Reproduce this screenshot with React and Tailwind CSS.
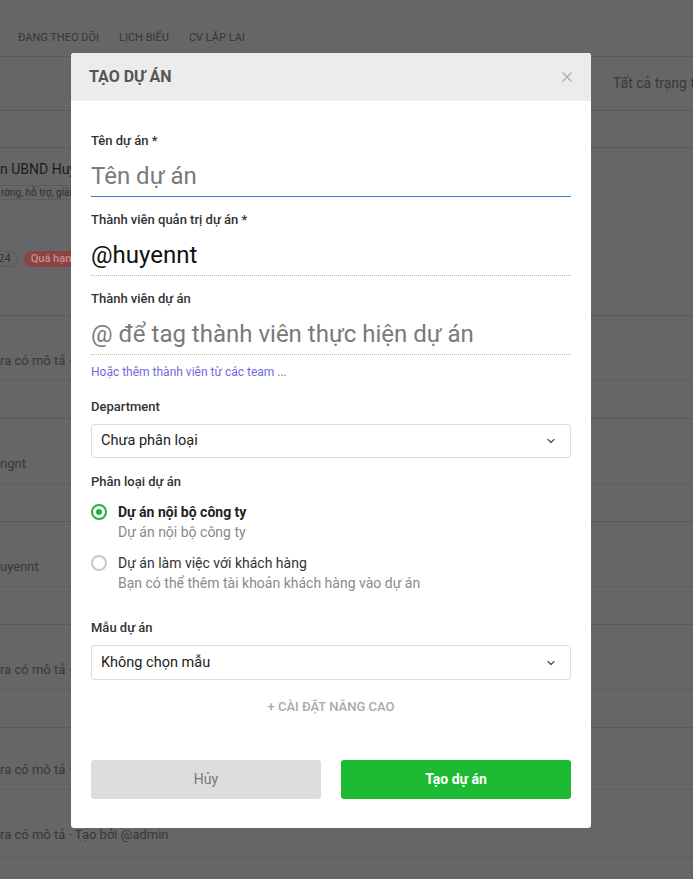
import { ChevronDown, X } from 'lucide-react'

const rows = [
  'ra có mô tả · Tạo bởi @admin',
  'ngnt',
  'uyennt',
  'ra có mô tả · Tạo bởi @admin',
]

function Label({ children, className = '' }) {
  return (
    <p className={`text-[13px] leading-4 font-medium text-[#333] ${className}`}>{children}</p>
  )
}

function SelectBox({ value, className = '' }) {
  return (
    <div className={`flex items-center justify-between border border-[#dedede] rounded-[3px] pl-[9px] pr-[13px] ${className}`}>
      <span className="text-[14.5px] text-[#222]">{value}</span>
      <ChevronDown className="w-[12px] h-[12px] text-[#555]" strokeWidth={2.5} />
    </div>
  )
}

function Radio({ checked, title, desc, className = '' }) {
  return (
    <div className={`flex gap-[11px] ${className}`}>
      <div className="pt-[2px]">
        {checked ? (
          <div className="w-4 h-4 rounded-full border-2 border-[#22b43a] flex items-center justify-center">
            <div className="w-[6px] h-[6px] rounded-full bg-[#22b43a]" />
          </div>
        ) : (
          <div className="w-4 h-4 rounded-full border-2 border-[#c8c8c8]" />
        )}
      </div>
      <div className="text-[14px] leading-5">
        <p className={checked ? 'font-bold text-[#222]' : 'text-[#333]'}>{title}</p>
        <p className="text-[#8a8a8a]">{desc}</p>
      </div>
    </div>
  )
}

export default function App() {
  return (
    <div className="relative h-[879px] overflow-hidden bg-[#666] font-['Roboto','Noto_Sans',sans-serif]">
      {/* dimmed page behind the dialog */}
      <div className="h-[57px] border-b border-[#5a5a5a] flex items-end gap-5 pl-[18px] pb-[10px] text-[11px] text-[#363636]">
        <span>ĐANG THEO DÕI</span>
        <span>LỊCH BIỂU</span>
        <span>CV LẶP LẠI</span>
      </div>
      <div className="h-[54px] border-b border-[#5a5a5a] flex items-center pl-[613px] text-[14px] text-[#383838] whitespace-nowrap">
        Tất cả trạng tha
      </div>
      <div className="h-[37px] border-b border-[#5a5a5a]" />
      <div className="h-[168px] border-b border-[#5a5a5a] pt-[11px]">
        <p className="text-[14px] leading-5 text-[#1c1c1c] whitespace-nowrap">n UBND Huyện</p>
        <div className="mt-[6px] -ml-[4px] w-[90px] border border-[#5c5c5c] rounded-[3px] px-[4px] text-[10px] leading-[13px] text-[#2e2e2e] whitespace-nowrap">
          rờng, hỗ trợ, giải
        </div>
        <div className="mt-[51px] flex items-center gap-[6px]">
          <span className="-ml-[21px] border border-[#585858] rounded-full px-[6px] text-[11px] leading-[14px] text-[#333]">2024</span>
          <span className="bg-[#8a4444] rounded-full px-[7px] text-[11px] leading-4 text-[#c78d8d] font-medium">Quá hạn</span>
        </div>
      </div>
      {rows.map((text, i) => (
        <div key={i} className="h-[103px] border-b border-[#5a5a5a] pt-[35px]">
          <p className="text-[13px] leading-5 text-[#383838] whitespace-nowrap pb-[9px] border-b border-dotted border-[#555]">{text}</p>
        </div>
      ))}
      <div className="pt-[32px]">
        <p className="text-[13px] leading-5 text-[#383838] whitespace-nowrap pb-[9px] border-b border-dotted border-[#555]">ra có mô tả · Tạo bởi @admin</p>
        <p className="mt-[35px] text-[13px] leading-5 text-[#383838] whitespace-nowrap pb-[12px] border-b border-dotted border-[#555]">ra có mô tả · Tạo bởi @admin</p>
      </div>

      {/* dialog */}
      <div className="absolute left-[71px] top-[53px] w-[520px] bg-white rounded-[3px] overflow-hidden">
        <div className="h-[48px] bg-[#ececec] flex items-center justify-between pl-[18px] pr-[16px]">
          <h2 className="text-[16px] font-bold text-[#555]">TẠO DỰ ÁN</h2>
          <X className="w-[16px] h-[16px] text-[#aaa]" strokeWidth={1.8} />
        </div>

        <div className="px-5 pt-[32px] pb-[29px]">
          <Label>Tên dự án *</Label>
          <div className="mt-[6px] h-[42px] border-b border-[#3b7ddd] flex items-center text-[24px] text-[#7a7a7a]">
            Tên dự án
          </div>

          <Label className="mt-[15px]">Thành viên quản trị dự án *</Label>
          <div className="mt-[6px] h-[42px] border-b border-dotted border-[#bbb] flex items-center text-[24px] text-[#111]">
            @huyennt
          </div>

          <Label className="mt-[15px]">Thành viên dự án</Label>
          <div className="mt-[6px] h-[42px] border-b border-dotted border-[#bbb] flex items-center text-[24px] text-[#7a7a7a]">
            @ để tag thành viên thực hiện dự án
          </div>
          <p className="mt-[9px] text-[12px] leading-4 text-[#6f6bdc]">Hoặc thêm thành viên từ các team ...</p>

          <Label className="mt-[19px]">Department</Label>
          <SelectBox value="Chưa phân loại" className="mt-[9px] h-[34px]" />

          <Label className="mt-[16px]">Phân loại dự án</Label>
          <Radio checked title="Dự án nội bộ công ty" desc="Dự án nội bộ công ty" className="mt-[12px]" />
          <Radio title="Dự án làm việc với khách hàng" desc="Bạn có thể thêm tài khoản khách hàng vào dự án" className="mt-[11px]" />

          <Label className="mt-[27px]">Mẫu dự án</Label>
          <SelectBox value="Không chọn mẫu" className="mt-[9px] h-[35px]" />

          <p className="mt-[19px] text-center text-[13px] leading-4 font-medium text-[#aaa]">+ CÀI ĐẶT NÂNG CAO</p>

          <div className="mt-[45px] grid grid-cols-2 gap-5">
            <button className="h-[39px] rounded-[3px] bg-[#dddddd] text-[14px] text-[#777]">Hủy</button>
            <button className="h-[39px] rounded-[3px] bg-[#1fba34] text-[14px] font-bold text-white">Tạo dự án</button>
          </div>
        </div>
      </div>
    </div>
  )
}
